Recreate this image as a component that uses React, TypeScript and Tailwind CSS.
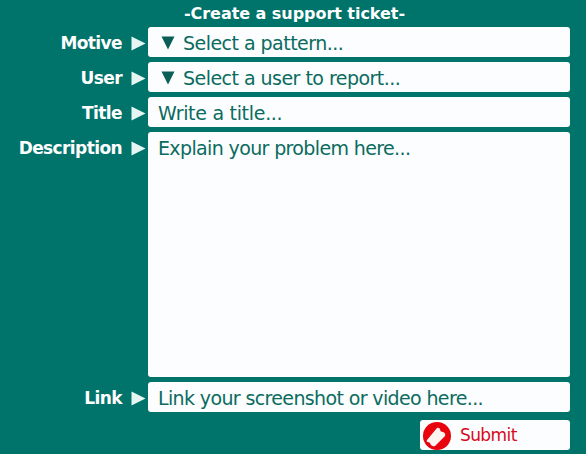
const font = "font-['DejaVu_Sans',sans-serif]";

function Row({ label, tall, children }: { label: string; tall?: boolean; children: React.ReactNode }) {
  return (
    <div className="flex gap-[2px]">
      <div className="w-[146px] h-[30px] pt-[3px] flex items-center justify-end gap-[9px] text-white font-bold text-[17px] tracking-[-0.6px]">
        <span>{label}</span>
        <svg width="15" height="15" viewBox="0 0 15 15" className="shrink-0">
          <path d="M0.5 0.5 L14.5 7.5 L0.5 14.5 Z" fill="#e6f7f3" />
        </svg>
      </div>
      <div
        className={`w-[422px] rounded-[3px] bg-[#fbfdfe] pl-[10px] pt-[1px] text-[#0b6b60] text-[19px] tracking-[-0.63px] leading-[30px] ${
          tall ? "h-[245px]" : "h-[30px]"
        }`}
      >
        {children}
      </div>
    </div>
  );
}

function Select({ text }: { text: string }) {
  return (
    <div className="flex items-center tracking-[-0.53px]">
      <svg width="14" height="14" viewBox="0 0 14 14" className="ml-[3px] mr-[8px] shrink-0">
        <path d="M0.5 0.5 L13.5 0.5 L7 13.5 Z" fill="#0b5f58" />
      </svg>
      <span>{text}</span>
    </div>
  );
}

export default function App() {
  return (
    <div className={`${font} w-[586px] h-[454px] bg-[#00736a] flex flex-col overflow-hidden`}>
      <div className="h-[27px] text-center text-white font-bold text-[16px] tracking-[-0.05px] leading-[27px] pl-[3px]">
        -Create a support ticket-
      </div>
      <div className="flex flex-col gap-[5px]">
        <Row label="Motive"><Select text="Select a pattern..." /></Row>
        <Row label="User"><Select text="Select a user to report..." /></Row>
        <Row label="Title"><span className="tracking-[-0.3px]">Write a title...</span></Row>
        <Row label="Description" tall>Explain your problem here...</Row>
        <Row label="Link">Link your screenshot or video here...</Row>
      </div>
      <div className="flex justify-end mt-[8px] pr-[16px]">
        <button className="w-[150px] h-[30px] rounded-[3px] bg-[#fbfdfe] flex items-center pl-[2px] pt-[1px] gap-[8px] text-[#d8091c] text-[17px] tracking-[-0.6px]">
          <svg width="30" height="28" viewBox="0 0 30 28">
            <circle cx="15" cy="14" r="14" fill="#e8040f" />
            <path d="M5 18 L15 6 Q17 5 18 7 Q18 10 21 10 Q24 11 23 14 L13 24 Q11 25 9 23 Q8 20 6 20 Q4 20 5 18 Z" fill="#fdf3f1" />
          </svg>
          <span className="pt-[1px]">Submit</span>
        </button>
      </div>
    </div>
  );
}
